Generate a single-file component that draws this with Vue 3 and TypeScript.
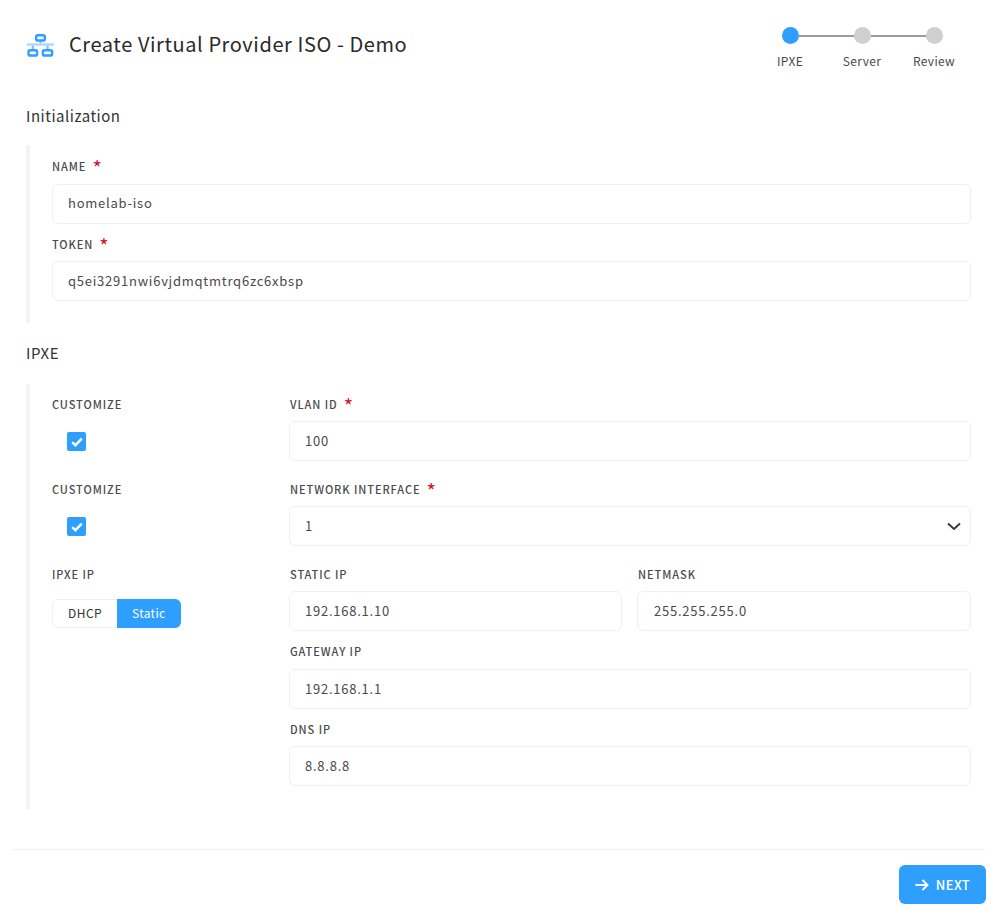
<script setup lang="ts">
const steps = [
  { label: 'IPXE', active: true },
  { label: 'Server', active: false },
  { label: 'Review', active: false },
]
</script>

<template>
  <div class="page">
    <header class="head">
      <div class="title-wrap">
        <svg class="logo" width="28" height="28" viewBox="0 0 28 28" fill="none">
          <path d="M14.5 10.5v2M6.8 14.5v4M21.5 14.5v4" stroke="#7cc0ff" stroke-width="2.2" />
          <path d="M0.7 13.5h27.3" stroke="#a6d6ff" stroke-width="2.2" />
          <rect x="10.2" y="4.2" width="8.6" height="5.3" rx="1.6" stroke="#2e9fff" stroke-width="2.4" />
          <rect x="2.5" y="19.2" width="8.6" height="5.3" rx="1.6" stroke="#2e9fff" stroke-width="2.4" />
          <rect x="16.9" y="19.2" width="9.2" height="5.3" rx="1.6" stroke="#2e9fff" stroke-width="2.4" />
        </svg>
        <h1>Create Virtual Provider ISO - Demo</h1>
      </div>
      <div class="steps">
        <div v-for="(s, i) in steps" :key="s.label" class="step">
          <div class="dot-row">
            <span v-if="i < 2" class="line"></span>
            <span class="dot" :class="{ on: s.active }"></span>
          </div>
          <span class="step-label">{{ s.label }}</span>
        </div>
      </div>
    </header>

    <h2 class="section-title first">Initialization</h2>
    <section class="block init">
      <div class="field">
        <label>NAME<i>*</i></label>
        <div class="input">homelab-iso</div>
      </div>
      <div class="field">
        <label>TOKEN<i>*</i></label>
        <div class="input">q5ei3291nwi6vjdmqtmtrq6zc6xbsp</div>
      </div>
    </section>

    <h2 class="section-title second">IPXE</h2>
    <section class="block ipxe">
      <div class="row">
        <div class="left">
          <label>CUSTOMIZE</label>
          <span class="check">
            <svg width="12" height="10" viewBox="0 0 12 10" fill="none"><path d="M1.2 5.2l3.2 3 6.4-6.6" stroke="#fff" stroke-width="2.4" /></svg>
          </span>
        </div>
        <div class="field grow">
          <label>VLAN ID<i>*</i></label>
          <div class="input">100</div>
        </div>
      </div>
      <div class="row">
        <div class="left">
          <label>CUSTOMIZE</label>
          <span class="check">
            <svg width="12" height="10" viewBox="0 0 12 10" fill="none"><path d="M1.2 5.2l3.2 3 6.4-6.6" stroke="#fff" stroke-width="2.4" /></svg>
          </span>
        </div>
        <div class="field grow">
          <label>NETWORK INTERFACE<i>*</i></label>
          <div class="input select">
            1
            <svg class="chevron" width="14" height="9" viewBox="0 0 14 9" fill="none"><path d="M1 1.5l6 5.5 6-5.5" stroke="#3a3a3a" stroke-width="2" /></svg>
          </div>
        </div>
      </div>
      <div class="row last">
        <div class="left">
          <label>IPXE IP</label>
          <div class="toggle">
            <span class="opt">DHCP</span>
            <span class="opt sel">Static</span>
          </div>
        </div>
        <div class="stack grow">
          <div class="pair">
            <div class="field">
              <label>STATIC IP</label>
              <div class="input">192.168.1.10</div>
            </div>
            <div class="field netmask">
              <label>NETMASK</label>
              <div class="input">255.255.255.0</div>
            </div>
          </div>
          <div class="field gateway">
            <label>GATEWAY IP</label>
            <div class="input">192.168.1.1</div>
          </div>
          <div class="field dns">
            <label>DNS IP</label>
            <div class="input">8.8.8.8</div>
          </div>
        </div>
      </div>
    </section>

    <footer class="foot">
      <button class="next" type="button">
        <svg width="14" height="12" viewBox="0 0 14 12" fill="none"><path d="M0.5 6h12M7.5 1l5 5-5 5" stroke="#fff" stroke-width="1.9" /></svg>
        NEXT
      </button>
    </footer>
  </div>
</template>

<style>
html, body { margin: 0; background: #fff; }
</style>

<style scoped>
.page {
  width: 997px;
  height: 915px;
  box-sizing: border-box;
  padding: 0 26px 0 26px;
  font-family: "Noto Sans CJK JP", "Noto Sans", sans-serif;
  font-weight: 400;
  color: #333;
  overflow: hidden;
}
.head {
  display: flex;
  justify-content: space-between;
  height: 78px;
  padding-top: 26px;
  box-sizing: border-box;
}
.title-wrap { display: flex; align-items: flex-start; }
.logo { margin-top: 5px; margin-right: 15px; }
h1 {
  margin: 0;
  font-size: 20px;
  font-weight: 400;
  line-height: 36px;
  letter-spacing: 0.58px;
  color: #2a2a2a;
}
.steps { display: flex; margin-right: 1px; }
.step {
  width: 72px;
  display: flex;
  flex-direction: column;
  align-items: center;
}
.dot-row { position: relative; height: 18px; width: 18px; margin-bottom: 9px; }
.dot {
  position: absolute;
  left: 1px;
  top: 1px;
  width: 17px;
  height: 17px;
  border-radius: 50%;
  background: #cfcfcf;
}
.dot.on { background: #2e9fff; }
.line {
  position: absolute;
  left: 18px;
  top: 9px;
  width: 56px;
  height: 2px;
  background: #9b9b9b;
}
.step-label { font-size: 12px; line-height: 16px; letter-spacing: 0.35px; color: #4a4a4a; }
.section-title {
  margin: 0;
  font-size: 15px;
  font-weight: 400;
  line-height: 24px;
  letter-spacing: 0.52px;
  color: #333;
}
.section-title.first { margin-top: 26px; }
.section-title.second { margin-top: 18px; }
.block {
  border-left: 4px solid #f3f3f3;
  padding-left: 22px;
}
.init { margin-top: 17px; height: 178px; padding-top: 11px; box-sizing: border-box; }
.ipxe { margin-top: 19px; height: 425px; padding-top: 11px; box-sizing: border-box; }
.field { display: flex; flex-direction: column; }
label {
  display: block;
  font-size: 11px;
  font-weight: 500;
  line-height: 20px;
  letter-spacing: 0.93px;
  color: #4a4a4a;
  height: 18px;
}
.ipxe label { line-height: 18px; }
.ipxe .gateway label, .ipxe .dns label { line-height: 20px; }
label i {
  font-style: normal;
  font-weight: 400;
  color: #d0112b;
  font-size: 20px;
  line-height: 18px;
  vertical-align: -5px;
  margin-left: 6px;
}
.grow label { padding-left: 1px; }
.input {
  height: 40px;
  box-sizing: border-box;
  margin-top: 8px;
  border: 1px solid #f0f0f0;
  border-radius: 6px;
  padding: 0 15px;
  font-size: 13px;
  line-height: 38px;
  letter-spacing: 0.76px;
  color: #4a4a4a;
}
.init .field:first-child .input { margin-top: 10px; line-height: 36px; }
.init .field + .field { margin-top: 10px; }
.init .field + .field .input { margin-top: 9px; }
.select { display: flex; justify-content: space-between; align-items: flex-start; padding-right: 9px; }
.chevron { margin-top: 15px; }
.row { display: flex; margin-bottom: 19px; }
.row.last { margin-bottom: 0; }
.left { width: 237px; flex: none; }
.grow { flex: 1; }
.check {
  display: flex;
  align-items: center;
  justify-content: center;
  width: 19px;
  height: 19px;
  margin: 19px 0 0 15px;
  background: #2e9fff;
  border-radius: 2px;
}
.toggle { display: inline-flex; margin-top: 16px; height: 29px; border: 1px solid #f0f0f0; border-radius: 6px; box-sizing: border-box; }
.opt { font-size: 12px; line-height: 25px; letter-spacing: 0.45px; padding: 0 15px; color: #333; }
.opt.sel {
  background: #2e9fff;
  color: #fff;
  border-radius: 0 6px 6px 0;
  margin: -1px -1px -1px 0;
  line-height: 27px;
  padding: 0 16px 2px 15px;
  letter-spacing: 0.3px;
}
.stack { display: flex; flex-direction: column; gap: 10px; }
.pair { display: grid; grid-template-columns: 333px 1fr; gap: 15px; }
.netmask .input { padding-left: 16px; }
.gateway .input { margin-top: 10px; }
.dns .input { margin-top: 9px; }
.foot {
  margin: 40px -15px 0 -15px;
  border-top: 1px solid #f3f3f3;
  padding-top: 15px;
  display: flex;
  justify-content: flex-end;
}
.next {
  display: flex;
  align-items: center;
  justify-content: center;
  gap: 7px;
  width: 87px;
  height: 39px;
  background: #2e9fff;
  border: none;
  border-radius: 6px;
  color: #fff;
  font-family: inherit;
  font-size: 13px;
  font-weight: 500;
  letter-spacing: 0.4px;
}
</style>
